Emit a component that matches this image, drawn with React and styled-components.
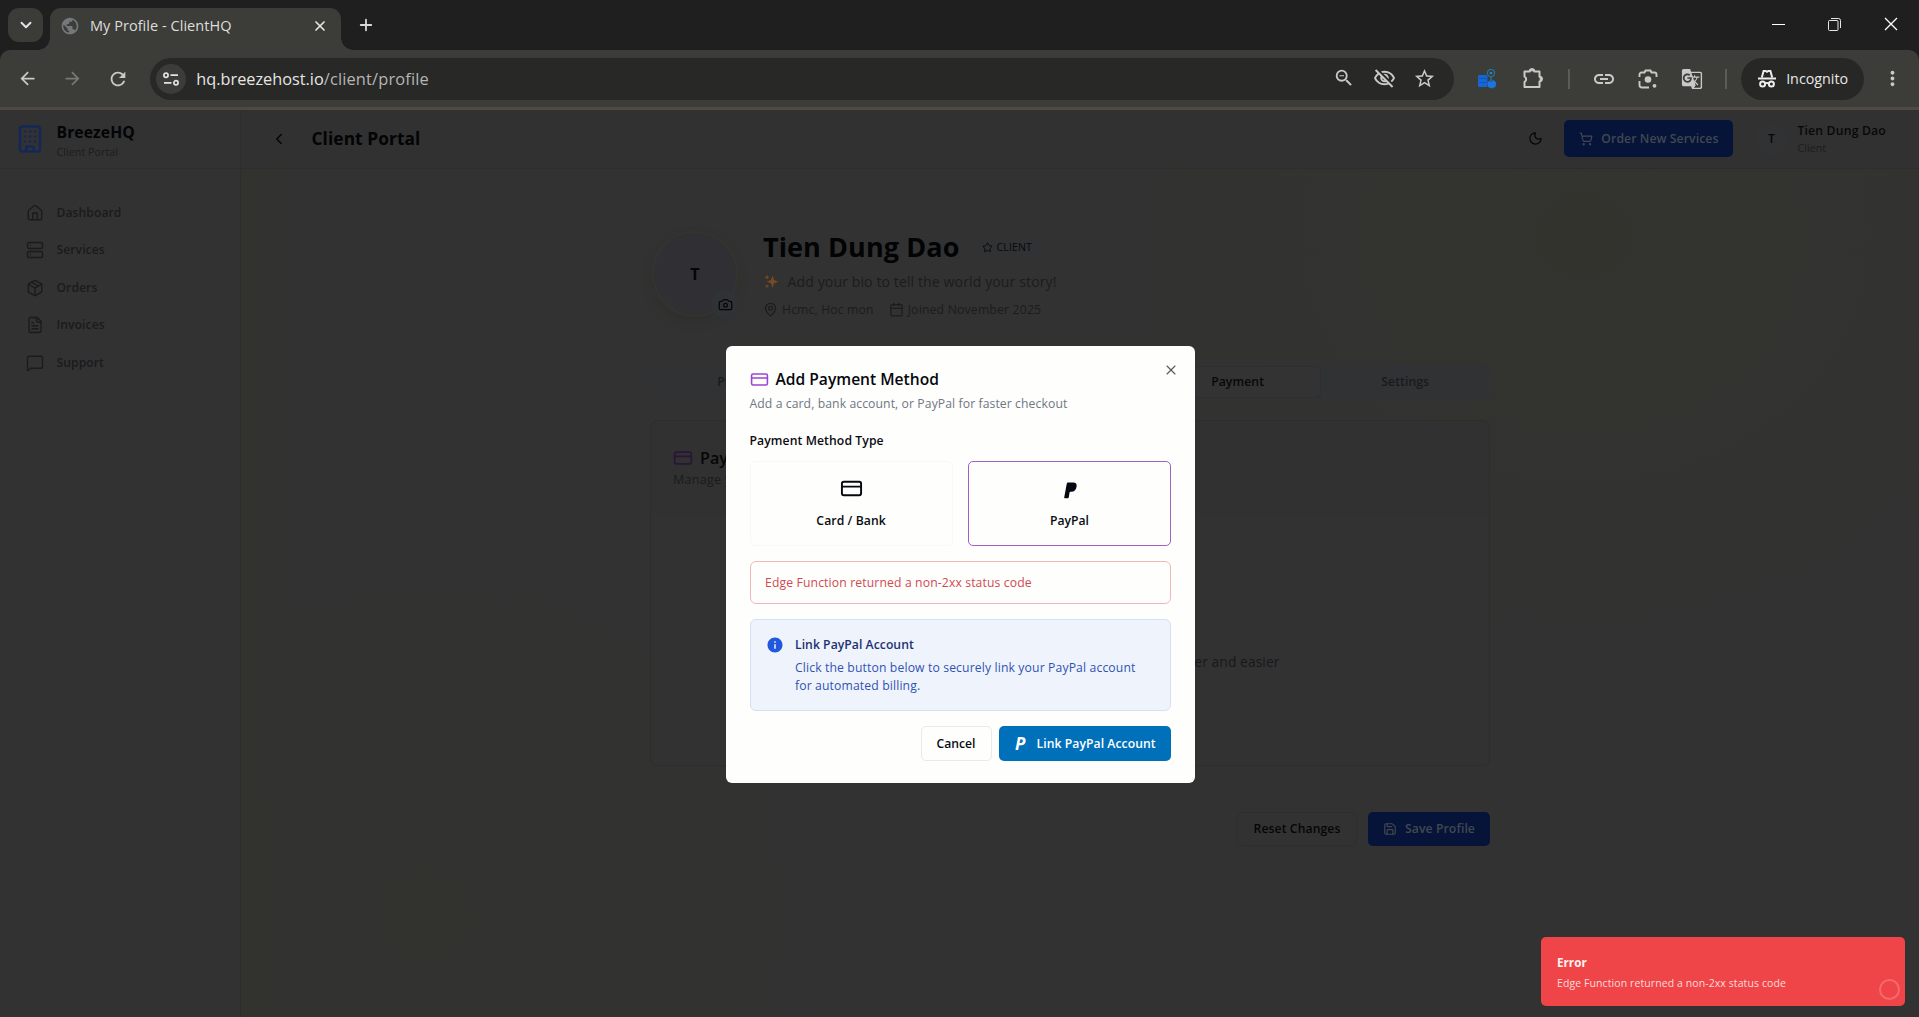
import React from "react";
import styled, { createGlobalStyle, css } from "styled-components";
import { Building, House, Server, Package, FileText, MessageSquare, Moon, ShoppingCart, ChevronLeft, Star, Camera, MapPin, Calendar, CreditCard, Save, X, ChevronDown, Plus } from "lucide-react";
import { MdZoomOut, MdOutlineVisibilityOff, MdStarBorder, MdLink, MdGTranslate, MdMoreVert, MdArrowBack, MdArrowForward, MdRefresh, MdPublic, MdInfo } from "react-icons/md";

const ui = '"Open Sans", "Noto Sans", sans-serif';

const GlobalStyle = createGlobalStyle`
  * { box-sizing: border-box; }
  body { margin: 0; background: #323232; overflow: hidden; font-family: ${ui}; }
  svg { display: block; flex: none; }
`;

const Text = styled.span`
  font-size: ${(p) => p.$size || 12.2}px;
  font-weight: ${(p) => p.$weight || 400};
  color: ${(p) => p.$color || "#171819"};
  letter-spacing: ${(p) => p.$track ?? 0.09}px;
  line-height: ${(p) => p.$line || 18}px;
  white-space: nowrap;
`;

const Window = styled.div`
  width: 1919px;
  height: 1017px;
  display: flex;
  flex-direction: column;
  overflow: hidden;
  position: relative;
  background: #1f1f1f;
`;

const TabStrip = styled.div`
  height: 50px;
  flex: none;
  display: flex;
  align-items: flex-end;
  padding-left: 8px;
`;
const TabSearch = styled.div`
  width: 35px;
  height: 34px;
  margin: 0 7px 8px 0;
  border-radius: 11px;
  background: #3b3b38;
  display: grid;
  place-items: center;
  color: #e3e3e3;
`;
const BrowserTab = styled.div`
  position: relative;
  width: 291px;
  height: 42px;
  border-radius: 11px 11px 0 0;
  background: #3c3c38;
  display: flex;
  align-items: center;
  padding: 0 13px 7px 10px;
  color: #e3e3e3;
  &::before, &::after {
    content: "";
    position: absolute;
    bottom: 0;
    width: 12px;
    height: 12px;
  }
  &::before { left: -12px; background: radial-gradient(circle at 0 0, transparent 11.5px, #3c3c38 12px); }
  &::after { right: -12px; background: radial-gradient(circle at 100% 0, transparent 11.5px, #3c3c38 12px); }
`;
const TabTitle = styled(Text)`
  margin-left: 10px;
  flex: 1;
`;
const NewTab = styled.div`
  margin: 0 0 16px 16px;
  color: #d8d8d6;
`;
const WindowButtons = styled.div`
  margin-left: auto;
  height: 50px;
  display: flex;
  align-items: center;
  gap: 43px;
  padding: 0 21px 2px 0;
`;

const Toolbar = styled.div`
  height: 60px;
  flex: none;
  background: #3c3c38;
  border-bottom: 3px solid #4a463f;
  border-image: linear-gradient(#45433d, #4e4941) 1;
  clip-path: inset(0 round 10px 10px 0 0);
  display: flex;
  align-items: center;
  color: #c9c9c7;
  padding: 0 15px 0 17px;
`;
const NavIcons = styled.div`
  display: flex;
  gap: 24px;
  width: 133px;
`;
const Omnibox = styled.div`
  width: 1306px;
  height: 42px;
  border-radius: 21px;
  background: #282827;
  display: flex;
  align-items: center;
  padding: 0 18px 0 6px;
`;
const SiteInfo = styled.div`
  width: 30px;
  height: 30px;
  border-radius: 50%;
  background: #3c3c39;
  display: grid;
  place-items: center;
  margin-right: 10.5px;
`;
const OmniIcons = styled.div`
  margin-left: auto;
  display: flex;
  gap: 17.5px;
`;
const Extensions = styled.div`
  width: 250px;
  margin: 0 14px 0 23px;
  display: flex;
  align-items: center;
  justify-content: space-between;
`;
const Separator = styled.i`
  width: 2px;
  height: 20px;
  background: #5b5b57;
`;
const ExtensionPair = styled.div`
  display: flex;
  align-items: center;
  gap: 25px;
`;
const IncognitoPill = styled.div`
  width: 123px;
  height: 42px;
  border-radius: 21px;
  background: #272726;
  display: flex;
  align-items: center;
  gap: 9px;
  padding-left: 16px;
  margin-left: auto;
  margin-right: 17px;
`;

const Page = styled.div`
  flex: 1;
  display: flex;
  min-height: 0;
`;
const Sidebar = styled.aside`
  width: 241px;
  background: #323232;
  border-right: 1px solid #2d2d2b;
`;
const Brand = styled.div`
  height: 59px;
  border-bottom: 1px solid #2d2d2b;
  display: flex;
  align-items: center;
  gap: 11.5px;
  padding-left: 15px;
`;
const BrandText = styled.div`
  display: flex;
  flex-direction: column;
  padding-top: 4px;
`;
const Stack = styled.div`
  display: flex;
  flex-direction: column;
`;
const Menu = styled.nav`
  padding: 25px 0 0 26px;
  display: flex;
  flex-direction: column;
`;
const MenuItem = styled.div`
  height: 37.5px;
  display: flex;
  align-items: center;
  gap: 12.5px;
  color: #191b1d;
`;
const Content = styled.div`
  flex: 1;
  display: flex;
  flex-direction: column;
`;
const Header = styled.header`
  height: 59px;
  flex: none;
  background: #313131;
  border-bottom: 1px solid #2d2d2b;
  display: flex;
  align-items: center;
  padding: 0 33px 1px 29px;
`;
const HeaderTitle = styled(Text)`
  margin: 0 auto 0 23.5px;
`;
const ThemeToggle = styled.div`
  margin-right: 21px;
  color: #050607;
`;
const Primary = styled.div`
  height: ${(p) => p.$h}px;
  width: ${(p) => p.$w}px;
  border-radius: 5px;
  background: #06143a;
  display: flex;
  align-items: center;
  justify-content: center;
  gap: 8px;
  color: #43474f;
`;
const UserAvatar = styled.div`
  width: 32px;
  height: 32px;
  margin: 0 10px 0 22px;
  border-radius: 50%;
  background: #303233;
  display: grid;
  place-items: center;
`;
const Main = styled.main`
  flex: 1;
  background:
    linear-gradient(90deg, #32322e 0, rgba(50, 50, 46, 0) 50px),
    radial-gradient(ellipse 480px 420px at 80% 8%, #33332e, rgba(51, 51, 46, 0)),
    radial-gradient(ellipse 420px 380px at 11% 88%, #32322f, rgba(50, 50, 47, 0)),
    #323232;
  padding: 62px 0 0 409px;
`;
const Profile = styled.section`
  display: flex;
  gap: 25px;
  height: 133px;
`;
const Photo = styled.div`
  position: relative;
  width: 86px;
  height: 86px;
  margin-left: 2px;
  border-radius: 50%;
  border: 2px solid #34342f;
  background: #2f2f34;
  box-shadow: 0 5px 9px #2f2f2d;
  display: grid;
  place-items: center;
`;
const CameraBadge = styled.div`
  position: absolute;
  right: -3px;
  bottom: -3px;
  width: 28px;
  height: 28px;
  border-radius: 50%;
  background: #2f3335;
  display: grid;
  place-items: center;
  color: #060708;
`;
const Row = styled.div`
  display: flex;
  align-items: center;
  gap: ${(p) => p.$gap || 0}px;
  height: ${(p) => p.$h}px;
  padding-top: ${(p) => p.$top || 0}px;
  color: ${(p) => p.$color || "inherit"};
`;
const Meta = styled.div`
  display: flex;
  align-items: center;
  gap: 4px;
  margin-right: 15px;
`;
const RoleBadge = styled.div`
  height: 20px;
  margin-left: 13px;
  padding: 0 9px;
  border-radius: 10px;
  background: #303234;
  color: #08090c;
  display: flex;
  align-items: center;
  gap: 4px;
`;
const Tabs = styled.div`
  width: 840px;
  height: 36px;
  border-radius: 6px;
  background: #303233;
  display: grid;
  grid-template-columns: repeat(5, 1fr);
  padding: 1px;
`;
const TabItem = styled.div`
  display: grid;
  place-items: center;
  border-radius: 5px;
  height: 32px;
  margin-top: 1px;
  &:first-child { padding-left: 4px; }
  ${(p) => p.$on && css`
    background: #333333;
    border: 1px solid #2e2e2e;
  `}
`;
const Card = styled.section`
  width: 840px;
  height: 346px;
  margin-top: 20px;
  border: 1px solid #2d2d2c;
  border-radius: 7px;
  background: #323232;
`;
const CardHead = styled.div`
  height: 94px;
  border-radius: 7px 7px 0 0;
  background: #313131;
  padding: 25px 0 0 22px;
  display: flex;
  flex-direction: column;
`;
const Empty = styled.div`
  display: flex;
  justify-content: center;
  padding-top: 138px;
`;
const Actions = styled.div`
  width: 840px;
  margin-top: 46px;
  display: flex;
  justify-content: flex-end;
  gap: 11px;
`;
const Ghost = styled.div`
  width: 120px;
  height: 34px;
  border: 1px solid #2e2e2d;
  border-radius: 5px;
  display: grid;
  place-items: center;
`;

const Overlay = styled.div`
  position: absolute;
  left: 0;
  right: 0;
  top: 110px;
  bottom: 0;
`;
const Modal = styled.div`
  position: absolute;
  left: 726px;
  top: 236px;
  width: 469px;
  height: 437px;
  border-radius: 6px;
  background: #fefefd;
  padding: 22px 24px 0 23.5px;
  color: #06080d;
`;
const CloseButton = styled.div`
  position: absolute;
  right: 16px;
  top: 16px;
  color: #55575a;
`;
const Methods = styled.div`
  display: grid;
  grid-template-columns: 1fr 1fr;
  gap: 15px;
`;
const Method = styled.div`
  height: 85px;
  border: ${(p) => (p.$on ? "1.5px solid #a35fc4" : "1.5px solid #f8f8f9")};
  border-radius: 5px;
  display: flex;
  flex-direction: column;
  align-items: center;
  padding-top: 15px;
  gap: 12px;
`;
const MethodIcon = styled.div`
  height: 23px;
  display: grid;
  place-items: center;
  ${(p) => p.$mark && css`
    padding: 4px 0 0 3px;
  `}
`;
const Alert = styled.div`
  height: 43px;
  margin-top: 15px;
  border: 1.5px solid #f0b9b9;
  border-radius: 6px;
  display: flex;
  align-items: center;
  padding-left: 14.5px;
`;
const Info = styled.div`
  height: 92px;
  margin-top: 15px;
  border: 1.5px solid #d5dff5;
  border-radius: 6px;
  background: #eff4fc;
  display: flex;
  gap: 11.5px;
  padding: 16px 0 0 15px;
  color: #2159dc;
`;
const InfoBody = styled.div`
  display: flex;
  flex-direction: column;
  margin-top: 5px;
`;
const Buttons = styled.div`
  display: flex;
  justify-content: flex-end;
  gap: 7.5px;
  margin-top: 15px;
`;
const Cancel = styled.div`
  width: 71px;
  height: 35px;
  border: 1px solid #e9e9ec;
  border-radius: 5px;
  display: grid;
  place-items: center;
`;
const LinkButton = styled.div`
  width: 172px;
  height: 35px;
  border-radius: 5px;
  background: #0070ba;
  display: flex;
  align-items: center;
  padding-left: 16px;
`;
const PMark = styled.span`
  width: 21.5px;
  font: italic 700 17px/18px ${ui};
  color: #fff;
`;
const Toast = styled.div`
  position: absolute;
  right: 14px;
  bottom: 11px;
  width: 364px;
  height: 69px;
  border-radius: 5px;
  background: #f04548;
  padding: 16px 0 0 16px;
  display: flex;
  flex-direction: column;
  gap: 3px;
`;
const Spinner = styled.i`
  position: absolute;
  right: 5px;
  bottom: 6px;
  width: 21px;
  height: 21px;
  border: 2px solid #f36a6d;
  border-radius: 50%;
`;

const TuneIcon = () => (
  <svg width="16" height="14" viewBox="0 0 16 14" fill="none" stroke="#e3e3e3" strokeWidth="1.7">
    <circle cx="3" cy="3.2" r="2.1" /><path d="M7.5 3.2H15M1 10.8h7.5" /><circle cx="13" cy="10.8" r="2.1" />
  </svg>
);
const RestoreIcon = () => (
  <svg width="13" height="13" viewBox="0 0 13 13" fill="none" stroke="#e6e6e6">
    <rect x=".5" y="2.5" width="9.5" height="10" rx="1" /><path d="M3 .5h7.5a2 2 0 0 1 2 2V10" />
  </svg>
);
const NetIcon = () => (
  <svg width="20" height="22" viewBox="0 0 20 22" fill="none">
    <rect x="1" y="7" width="9.5" height="12" rx="1.5" fill="#1766d6" />
    <path d="M2 10.5h8M2 14.5h8" stroke="#1150b0" strokeWidth=".8" />
    <circle cx="14" cy="5" r="3.5" stroke="#1f77ad" strokeWidth="1.2" /><circle cx="14" cy="5" r="1.3" fill="#2a86c4" />
    <path d="M14 9v4" stroke="#1f77ad" strokeWidth="1.4" />
    <path d="M10.5 14.5l2-2 1.7 1.5 2-2.2 3 2.7-.6 4.2-3.6 1.8-4-1.6z" fill="#1b74e0" />
  </svg>
);
const PuzzleIcon = () => (
  <svg width="23" height="23" viewBox="0 0 23 23" fill="none" stroke="#c9c9c7" strokeWidth="2" strokeLinejoin="round">
    <path d="M2.5 4.5h5.2a2.3 2.3 0 0 1 4.6 0h5.2v5.3a2.3 2.3 0 0 1 0 4.6v5.6h-15v-5a3 3 0 0 0 0-5.4z" />
    <path d="M8 3.8a2 2 0 0 1 4 0zM18.2 10a2 2 0 0 1 0 4z" fill="#c9c9c7" strokeWidth="1" />
  </svg>
);
const LensIcon = () => (
  <svg width="20" height="20" viewBox="0 0 20 20" fill="none" stroke="#c9c9c7" strokeWidth="1.9">
    <path d="M1.5 8V5.5a2 2 0 0 1 2-2h3l1-2h5l1 2h3a2 2 0 0 1 2 2V8M1.5 12v4a2.5 2.5 0 0 0 2.5 2.5h7" />
    <circle cx="10" cy="10.5" r="3.3" fill="#c9c9c7" stroke="none" /><circle cx="16.5" cy="16.8" r="1.9" fill="#c9c9c7" stroke="none" />
  </svg>
);
const IncognitoIcon = () => (
  <svg width="20" height="20" viewBox="0 0 20 20" fill="none" stroke="#ededed" strokeWidth="2">
    <path d="M4.8 8.5L6.6 2h2l1.4.8L11.4 2h2l1.8 6.5" /><path d="M1 9.4h18" />
    <circle cx="5.6" cy="15" r="2.5" /><circle cx="14.4" cy="15" r="2.5" /><path d="M8 14.5q2-1.2 4 0" />
  </svg>
);
const PayPalIcon = () => (
  <svg width="13" height="17" viewBox="0 0 13 17">
    <path d="M2.8 1.4Q3 .5 3.9.5h5.4c2.5 0 3.7 1.5 3.3 3.9-.5 3.4-2.4 5.3-5.4 5.3H6.3q-.6 0-.7.6l-.8 5q-.1.9-1 .9H.9q-.8 0-.7-.8z" fill="#06080f" />
  </svg>
);
const SparklesMark = () => (
  <svg width="17" height="17" viewBox="0 0 17 17" fill="#7a4a20">
    <path d="M9.5 2.5l1.5 4.6 4.4 1.6L11 10.2l-1.5 4.6L8 10.2 3.8 8.7 8 7.1z" />
    <path d="M4 1.6l.7 1.9 1.9.7-1.9.7L4 6.8l-.7-1.9-1.9-.7 1.9-.7zM4 11l.6 1.6 1.6.6-1.6.6L4 15.4l-.6-1.6-1.6-.6 1.6-.6z" />
  </svg>
);

const menu = [[House, "Dashboard"], [Server, "Services"], [Package, "Orders"], [FileText, "Invoices"], [MessageSquare, "Support"]];
const tabs = ["Profile", "Security", "Billing", "Payment", "Settings"];

export default function App() {
  return (
    <Window>
      <GlobalStyle />
      <TabStrip>
        <TabSearch><ChevronDown size={18} strokeWidth={2.6} /></TabSearch>
        <BrowserTab>
          <MdPublic size={20} color="#75777a" />
          <TabTitle $size={14.5} $track={0.04} $color="#dededc">My Profile - ClientHQ</TabTitle>
          <X size={16} strokeWidth={2.6} />
        </BrowserTab>
        <NewTab><Plus size={18} strokeWidth={2.4} /></NewTab>
        <WindowButtons>
          <svg width="13" height="13" viewBox="0 0 13 13" stroke="#fff"><path d="M0 6.5h13" /></svg>
          <RestoreIcon />
          <svg width="14" height="14" viewBox="0 0 14 14" stroke="#fff" strokeWidth="1.3"><path d="M1 1l12 12M13 1L1 13" /></svg>
        </WindowButtons>
      </TabStrip>
      <Toolbar>
        <NavIcons>
          <MdArrowBack size={21} /><MdArrowForward size={21} color="#777774" /><MdRefresh size={22} />
        </NavIcons>
        <Omnibox>
          <SiteInfo><TuneIcon /></SiteInfo>
          <Text $size={16.3} $track={0} $color="#e6e6e4">hq.breezehost.io</Text>
          <Text $size={16.4} $track={0.15} $color="#b5b5b3">/client/profile</Text>
          <OmniIcons><MdZoomOut size={22} /><MdOutlineVisibilityOff size={23} /><MdStarBorder size={23} /></OmniIcons>
        </Omnibox>
        <Extensions>
          <ExtensionPair><NetIcon /><PuzzleIcon /></ExtensionPair>
          <Separator /><MdLink size={24} /><LensIcon /><MdGTranslate size={22} /><Separator />
        </Extensions>
        <IncognitoPill><IncognitoIcon /><Text $size={14.3} $track={0} $color="#e8e8e6">Incognito</Text></IncognitoPill>
        <MdMoreVert size={23} />
      </Toolbar>
      <Page>
        <Sidebar>
          <Brand>
            <Building size={30} color="#142858" strokeWidth={2.1} />
            <BrandText>
              <Text $size={15.7} $weight={700} $color="#030405" $line={21}>BreezeHQ</Text>
              <Text $size={10.6} $color="#1b1c1e" $line={18}>Client Portal</Text>
            </BrandText>
          </Brand>
          <Menu>
            {menu.map(([Icon, label]) => (
              <MenuItem key={label}><Icon size={18} strokeWidth={1.8} /><Text $size={12.1} $weight={550} $color="#191b1d">{label}</Text></MenuItem>
            ))}
          </Menu>
        </Sidebar>
        <Content>
          <Header>
            <ChevronLeft size={18} color="#050607" />
            <HeaderTitle $size={17.3} $weight={700} $color="#030405" $line={24}>Client Portal</HeaderTitle>
            <ThemeToggle><Moon size={15} /></ThemeToggle>
            <Primary $w={169} $h={37}><ShoppingCart size={14} /><Text $weight={600} $color="#43474f">Order New Services</Text></Primary>
            <UserAvatar><Text $weight={600} $color="#06080b">T</Text></UserAvatar>
            <Stack>
              <Text $weight={600} $track={0.2} $color="#070809">Tien Dung Dao</Text>
              <Text $size={10.6} $color="#1b1c1e" $line={16}>Client</Text>
            </Stack>
          </Header>
          <Main>
            <Profile>
              <Photo><Text $size={16} $weight={700} $color="#040506">T</Text><CameraBadge><Camera size={15} /></CameraBadge></Photo>
              <Stack>
                <Row $h={32}>
                  <Text $size={27} $weight={700} $color="#020304" $line={34}>Tien Dung Dao</Text>
                  <RoleBadge><Star size={11} /><Text $size={10.6} $color="#08090c">CLIENT</Text></RoleBadge>
                </Row>
                <Row $h={37} $gap={7.5} $color="#5a3a1c"><SparklesMark /><Text $size={14.1} $color="#1b1c1e">Add your bio to tell the world your story!</Text></Row>
                <Row $h={19} $color="#1b1c1e">
                  <Meta><MapPin size={15} /><Text $track={0.15} $color="#1b1c1e">Hcmc, Hoc mon</Text></Meta>
                  <Meta><Calendar size={15} /><Text $track={0.2} $color="#1b1c1e">Joined November 2025</Text></Meta>
                </Row>
              </Stack>
            </Profile>
            <Tabs>
              {tabs.map((t) => (
                <TabItem key={t} $on={t === "Payment"}>
                  <Text $weight={600} $color={t === "Payment" ? "#070809" : "#181b1e"}>{t}</Text>
                </TabItem>
              ))}
            </Tabs>
            <Card>
              <CardHead>
                <Row $h={24} $gap={7} $color="#291539"><CreditCard size={20} /><Text $size={16} $weight={600} $color="#050607">Payment Methods</Text></Row>
                <Text $size={12.5} $track={0.3} $line={20} $color="#191b1d">Manage your saved payment methods</Text>
              </CardHead>
              <Empty><Text $size={13.8} $color="#17191b">Add a payment method to make your checkout faster and easier</Text></Empty>
            </Card>
            <Actions>
              <Ghost><Text $weight={600} $color="#050607">Reset Changes</Text></Ghost>
              <Primary $w={122} $h={34}><Save size={14} /><Text $weight={600} $color="#43474f">Save Profile</Text></Primary>
            </Actions>
          </Main>
        </Content>
      </Page>
      <Overlay>
        <Modal role="dialog">
          <CloseButton><X size={16} strokeWidth={1.6} /></CloseButton>
          <Row $h={22} $gap={7} $color="#9a45cf"><CreditCard size={19} /><Text $size={15.6} $weight={550} $track={0} $color="#06080d">Add Payment Method</Text></Row>
          <Row $h={27}><Text $color="#707684">Add a card, bank account, or PayPal for faster checkout</Text></Row>
          <Row $h={44} $top={3}><Text $weight={600} $color="#0a0c12">Payment Method Type</Text></Row>
          <Methods>
            <Method><MethodIcon><CreditCard size={23} /></MethodIcon><Text $weight={600} $color="#0a0c12">Card / Bank</Text></Method>
            <Method $on><MethodIcon $mark><PayPalIcon /></MethodIcon><Text $weight={600} $track={-0.05} $color="#0a0c12">PayPal</Text></Method>
          </Methods>
          <Alert><Text $track={0.13} $color="#d04a50">Edge Function returned a non-2xx status code</Text></Alert>
          <Info>
            <MdInfo size={18} />
            <Stack>
              <Text $weight={600} $track={0.04} $color="#1d3172">Link PayPal Account</Text>
              <InfoBody>
                <Text $track={0.13} $color="#3152b3">Click the button below to securely link your PayPal account</Text>
                <Text $track={0.13} $color="#3152b3">for automated billing.</Text>
              </InfoBody>
            </Stack>
          </Info>
          <Buttons>
            <Cancel><Text $weight={600} $track={0} $color="#0a0c12">Cancel</Text></Cancel>
            <LinkButton><PMark>P</PMark><Text $weight={600} $track={0.06} $color="#fff">Link PayPal Account</Text></LinkButton>
          </Buttons>
        </Modal>
        <Toast>
          <Text $size={11.7} $weight={700} $track={0} $color="#fff3f3">Error</Text>
          <Text $size={10.5} $color="#fbdcdc">Edge Function returned a non-2xx status code</Text>
          <Spinner />
        </Toast>
      </Overlay>
    </Window>
  );
}
